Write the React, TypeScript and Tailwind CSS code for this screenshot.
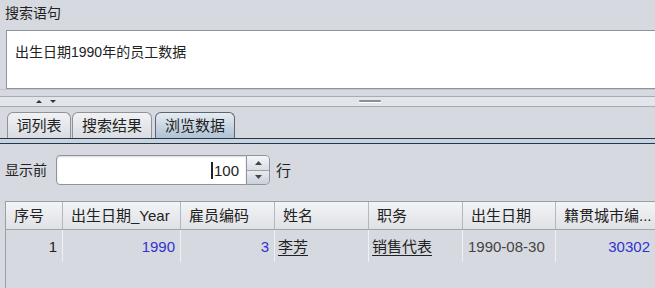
import React from "react";

const font = { fontFamily: '"Liberation Sans", "Noto Sans CJK SC", sans-serif' };

function Tab({ label, w, selected }: { label: string; w: string; selected?: boolean }) {
  return (
    <div
      className={
        "h-[26px] flex items-center justify-center rounded-t-[6px] border border-b-0 text-[15px] leading-none text-[#222] " +
        w +
        (selected
          ? " border-[#5c6670] bg-gradient-to-b from-[#e6ecf2] to-[#afc2d4]"
          : " border-[#8d929b] bg-gradient-to-b from-[#f1f2f4] to-[#d9dce1]")
      }
    >
      {label}
    </div>
  );
}

const cols = [
  { name: "序号", w: "w-[57px]" },
  { name: "出生日期_Year", w: "w-[118px]" },
  { name: "雇员编码", w: "w-[94px]" },
  { name: "姓名", w: "w-[94px]" },
  { name: "职务", w: "w-[94px]" },
  { name: "出生日期", w: "w-[93px]" },
  { name: "籍贯城市编...", w: "flex-1" },
];

export default function App() {
  return (
    <div className="w-[655px] h-[288px] bg-[#d6d9df] overflow-hidden flex flex-col text-[#222]" style={font}>
      {/* label */}
      <div className="h-[30px] pl-[5px] text-[14px] leading-[26px]">搜索语句</div>
      {/* text area */}
      <div className="ml-[6px] h-[59px] bg-white border border-r-0 border-[#8e939c] pl-[8px] pt-[13px] text-[14px] leading-[16px]">
        出生日期1990年的员工数据
      </div>
      {/* splitter */}
      <div className="h-[18px] flex flex-col">
        <div className="h-[1px] bg-[#c3c6cc]" />
        <div className="h-[6px]" />
        <div className="h-[1px] bg-[#a7abb3]" />
        <div className="h-[9px] bg-[#e2e5e9] relative flex items-center">
          <svg className="absolute left-[35px] top-[2px]" width="24" height="5" viewBox="0 0 24 5">
            <polygon points="1,4 4,1 7,4" fill="#333" />
            <polygon points="15,1 21,1 18,4" fill="#333" />
          </svg>
          <div className="absolute left-[359px] top-[3px] w-[22px] h-[2px] bg-[#8b8f96] rounded-full" />
          <div className="absolute left-[359px] top-[5px] w-[22px] h-[1px] bg-white" />
        </div>
        <div className="h-[1px] bg-[#a7abb3]" />
      </div>
      {/* tabs */}
      <div className="pt-[5px]">
        <div className="flex items-end gap-[1px] pl-[7px]">
          <Tab label="词列表" w="w-[64px]" />
          <Tab label="搜索结果" w="w-[80px]" />
          <div className="w-[1px]" />
          <Tab label="浏览数据" w="w-[80px]" selected />
        </div>
        <div className="h-[1px] bg-[#2d3540]" />
        <div className="h-[4px] bg-[#c5d4e3]" />
        <div className="h-[1px] bg-[#2d3540]" />
      </div>
      {/* spinner row */}
      <div className="flex items-center pl-[5px] mt-[11px] h-[30px]">
        <span className="text-[14px] leading-none w-[51px]">显示前</span>
        <div className="w-[191px] h-[30px] bg-white border border-[#8e949d] rounded-l-[4px] shadow-[inset_0_1px_2px_rgba(0,0,0,0.15)] flex items-center justify-end pr-[7px]">
          <div className="w-[1.5px] h-[17px] bg-[#222] mr-[1px]" />
          <span className="text-[15px] leading-none">100</span>
        </div>
        <div className="w-[23px] h-[30px] flex flex-col border border-l-0 border-[#8e949d] rounded-r-[5px] overflow-hidden">
          <div className="flex-1 flex items-center justify-center bg-gradient-to-b from-[#f4f6f8] to-[#d9dee5] border-b border-[#9aa0a8]">
            <svg width="7" height="4" viewBox="0 0 7 4"><polygon points="0,4 3.5,0 7,4" fill="#444" /></svg>
          </div>
          <div className="flex-1 flex items-center justify-center bg-gradient-to-b from-[#e8ecf0] to-[#c9d0d9]">
            <svg width="7" height="4" viewBox="0 0 7 4"><polygon points="0,0 7,0 3.5,4" fill="#444" /></svg>
          </div>
        </div>
        <span className="ml-[6px] text-[15px] leading-none">行</span>
      </div>
      {/* table */}
      <div className="ml-[5px] mt-[16px] flex-1 border-l border-t border-[#9a9ea6] flex flex-col">
        <div className="flex h-[28px] bg-gradient-to-b from-[#f3f4f6] to-[#dfe1e5] border-b border-[#a2a6ad]">
          {cols.map((c, i) => (
            <div
              key={i}
              className={
                c.w +
                " shrink-0 flex items-center pl-[8px] text-[15px] leading-none whitespace-nowrap " +
                (i < cols.length - 1 ? "border-r border-[#b3b7be]" : "")
              }
            >
              {c.name}
            </div>
          ))}
        </div>
        <div className="flex h-[32px] text-[15px] leading-none">
          <div className="w-[57px] shrink-0 flex items-center justify-end pr-[5px] border-r border-[#eef0f3]">1</div>
          <div className="w-[118px] shrink-0 flex items-center justify-end pr-[5px] border-r border-[#eef0f3] text-[#3232d0]">1990</div>
          <div className="w-[94px] shrink-0 flex items-center justify-end pr-[5px] border-r border-[#eef0f3] text-[#3232d0]">3</div>
          <div className="w-[94px] shrink-0 flex items-center pl-[3px] border-r border-[#eef0f3]"><span className="underline underline-offset-[3px]">李芳</span></div>
          <div className="w-[94px] shrink-0 flex items-center pl-[3px] border-r border-[#eef0f3]"><span className="underline underline-offset-[3px]">销售代表</span></div>
          <div className="w-[93px] shrink-0 flex items-center pl-[5px] border-r border-[#eef0f3] text-[#444]">1990-08-30</div>
          <div className="flex-1 flex items-center justify-end pr-[5px] text-[#3232d0]">30302</div>
        </div>
      </div>
    </div>
  );
}
